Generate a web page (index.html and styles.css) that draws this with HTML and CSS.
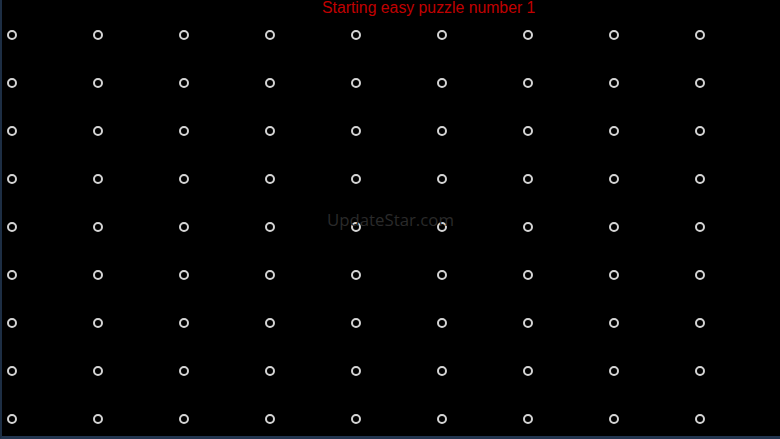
FILE: index.html
```html
<!DOCTYPE html>
<html>
<head>
<meta charset="utf-8">
<link rel="stylesheet" href="styles.css">
</head>
<body>
<div class="frame">
  <div class="title">Starting easy puzzle number 1</div>
  <div class="grid" id="grid"></div>
  <div class="watermark">UpdateStar.com</div>
</div>
<script>
  var g = document.getElementById('grid');
  for (var i = 0; i < 81; i++) {
    var d = document.createElement('span');
    d.className = 'dot';
    g.appendChild(d);
  }
</script>
</body>
</html>
```
FILE: styles.css
```css
html, body {
  margin: 0;
  padding: 0;
  background: #000;
}
.frame {
  position: relative;
  width: 780px;
  height: 439px;
  box-sizing: border-box;
  border-left: 2px solid #1d2e44;
  border-bottom: 3px solid #22354f;
  background: #000;
  overflow: hidden;
}
.title {
  font-family: "Liberation Sans", Arial, sans-serif;
  font-size: 15.8px;
  line-height: 15px;
  height: 14px;
  color: #c00000;
  padding-left: 320px;
}
.grid {
  display: grid;
  grid-template-columns: repeat(9, 86px);
  grid-auto-rows: 10px;
  row-gap: 38px;
  padding-left: 5px;
  margin-top: 16px;
}
.dot {
  display: block;
  width: 10px;
  height: 10px;
  box-sizing: border-box;
  border: 2px solid #d4d4d4;
  border-radius: 50%;
}
.watermark {
  position: absolute;
  left: 325px;
  top: 208px;
  font-family: "Open Sans", sans-serif;
  font-size: 16.8px;
  color: #2a2a2a;
}
```
